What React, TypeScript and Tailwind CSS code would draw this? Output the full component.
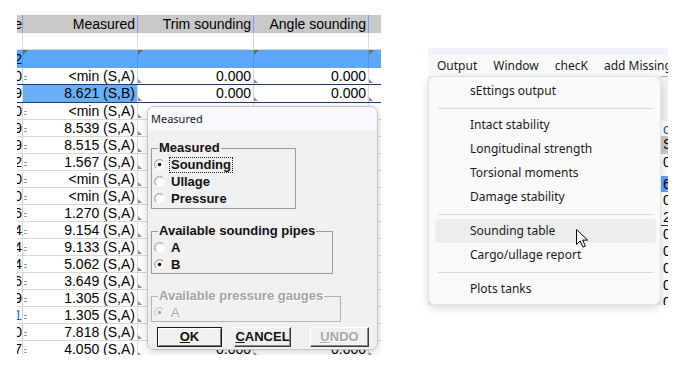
import React from 'react';

type Row = { l: string; m: string; sel?: boolean; lBlue?: boolean };

const rows: Row[] = [
  { l: '0', m: '<min (S,A)' },
  { l: '9', m: '8.621 (S,B)', sel: true },
  { l: '0', m: '<min (S,A)' },
  { l: '9', m: '8.539 (S,A)' },
  { l: '9', m: '8.515 (S,A)' },
  { l: '2', m: '1.567 (S,A)' },
  { l: '0', m: '<min (S,A)' },
  { l: '0', m: '<min (S,A)' },
  { l: '6', m: '1.270 (S,A)' },
  { l: '4', m: '9.154 (S,A)' },
  { l: '4', m: '9.133 (S,A)' },
  { l: '4', m: '5.062 (S,A)' },
  { l: '6', m: '3.649 (S,A)' },
  { l: '9', m: '1.305 (S,A)' },
  { l: '1', m: '1.305 (S,A)', lBlue: true },
  { l: '0', m: '7.818 (S,A)' },
  { l: '7', m: '4.050 (S,A)' },
];

function TriBL() {
  return <span className="absolute left-0 bottom-[1px] w-0 h-0 border-l-[4px] border-t-[4px] border-t-transparent border-l-[#8c8c8c]" />;
}

function TriTL() {
  return <span className="absolute left-0 top-0 w-0 h-0 border-t-[5px] border-r-[5px] border-r-transparent border-t-[#6b6b6b]" />;
}

function EqMark() {
  return (
    <span className="absolute left-[1px] top-[8px] flex flex-col gap-[2px]">
      <span className="block w-[3px] h-px bg-[#9a9a9a]" />
      <span className="block w-[3px] h-px bg-[#9a9a9a]" />
    </span>
  );
}

function Header() {
  const cell = 'h-full border-r border-[#9090f0] leading-[18px] text-right pr-[2px] whitespace-nowrap';
  return (
    <div className="flex h-[18px] bg-[#c9c9c9]">
      <div className="w-[6px] h-full border-r border-[#9090f0] flex justify-end overflow-hidden leading-[18px]">
        <span className="whitespace-nowrap">Type</span>
      </div>
      <div className={`w-[115px] ${cell}`}>Measured</div>
      <div className={`w-[116px] ${cell}`}>Trim sounding</div>
      <div className={`w-[115px] ${cell}`}>Angle sounding</div>
      <div className="w-[12px] h-full" />
    </div>
  );
}

function BlankRow() {
  const c = 'h-full border-r border-b border-[#d8d8d8]';
  return (
    <div className="flex h-[17px] bg-white">
      <div className={`w-[6px] ${c}`} />
      <div className={`w-[115px] ${c}`} />
      <div className={`w-[116px] ${c}`} />
      <div className={`w-[115px] ${c}`} />
      <div className="w-[12px] h-full border-b border-[#d8d8d8]" />
    </div>
  );
}

function BlueRow() {
  const c = 'relative h-full border-r border-[#4f98e8]';
  return (
    <div className="flex h-[18px] bg-[#5aa7fb]">
      <div className={`w-[6px] ${c} flex justify-end overflow-hidden leading-[18px]`}>
        <span className="whitespace-nowrap">2</span>
      </div>
      <div className={`w-[115px] ${c}`}><TriTL /></div>
      <div className={`w-[116px] ${c}`}><TriTL /></div>
      <div className={`w-[115px] ${c}`}><TriTL /></div>
      <div className="relative w-[12px] h-full"><TriTL /></div>
    </div>
  );
}

function DataRow({ r, nextSel }: { r: Row; nextSel?: boolean }) {
  const bottom = r.sel || nextSel ? 'border-b border-b-[#183a70]' : 'border-b border-b-[#d8d8d8]';
  const vr = 'border-r border-r-[#d8d8d8]';
  return (
    <div className={`flex ${r.sel ? 'h-[18px]' : 'h-[17px]'} bg-white ${bottom}`}>
      <div className={`w-[6px] h-full ${vr} flex justify-end overflow-hidden leading-[16px]`}>
        <span className={`whitespace-nowrap ${r.lBlue ? 'text-[#2a6fd8]' : ''}`}>{r.l}</span>
      </div>
      <div className={`relative w-[115px] h-full ${vr} text-right pr-[2px] leading-[16px] whitespace-nowrap ${r.sel ? 'bg-[#68aef8]' : ''}`}>
        <EqMark />
        {r.m}
      </div>
      <div className={`relative w-[116px] h-full ${vr} text-right pr-[2px] leading-[16px]`}>
        <TriBL />
        0.000
      </div>
      <div className={`relative w-[115px] h-full ${vr} text-right pr-[2px] leading-[16px]`}>
        <TriBL />
        0.000
      </div>
      <div className="relative w-[12px] h-full">
        <TriBL />
      </div>
    </div>
  );
}

function Radio({ checked, disabled }: { checked?: boolean; disabled?: boolean }) {
  return (
    <svg width="11" height="11" viewBox="0 0 11 11" className="shrink-0">
      <circle cx="5.5" cy="5.5" r="5" fill={disabled ? '#f0f0f0' : '#ffffff'} />
      <path d="M1.96 9.04 A5 5 0 0 1 9.04 1.96" fill="none" stroke={disabled ? '#c4c4c4' : '#9c9c9c'} strokeWidth="1" />
      <path d="M2.6 8.4 A4 4 0 0 1 8.4 2.6" fill="none" stroke={disabled ? '#dcdcdc' : '#cfcfcf'} strokeWidth="1" />
      {checked && <circle cx="5.5" cy="5.5" r="1.8" fill={disabled ? '#a8a8a8' : '#111111'} />}
    </svg>
  );
}

function RadioRow({ label, checked, focus, disabled }: { label: string; checked?: boolean; focus?: boolean; disabled?: boolean }) {
  return (
    <div className="flex items-center h-[17px] pl-[1px]">
      <Radio checked={checked} disabled={disabled} />
      <span
        className={`ml-[4px] px-[1px] leading-[14px] border ${focus ? 'border-dotted border-[#222]' : 'border-transparent'} ${
          disabled ? 'text-[#a4a4a4] font-normal [text-shadow:1px_1px_0_#ffffff]' : 'text-[#111] font-bold'
        }`}
      >
        {label}
      </span>
    </div>
  );
}

function Btn({ w, children, def, disabled }: { w: string; children: React.ReactNode; def?: boolean; disabled?: boolean }) {
  const border = def
    ? 'border border-[#1a1a1a] shadow-[inset_1px_1px_0_#ffffff,inset_-1px_-1px_0_#7a7a7a]'
    : 'border border-t-white border-l-white border-r-[#3a3a3a] border-b-[#3a3a3a] shadow-[inset_-1px_-1px_0_#8a8a8a]';
  return (
    <div
      className={`${w} h-[20px] ${border} bg-[#f0f0f0] flex items-center justify-center font-bold leading-[14px] ${
        disabled ? 'text-[#a8a8a8] [text-shadow:1px_1px_0_#ffffff]' : 'text-[#111]'
      }`}
    >
      {children}
    </div>
  );
}

function Dialog() {
  return (
    <div className="absolute left-[130px] top-[91px] w-[231px] h-[244px] rounded-[7px] border border-[#c4c4c4] bg-[#f0f0f0] shadow-[0_2px_10px_rgba(0,0,0,0.18)] overflow-hidden flex flex-col">
      <div className="h-[24px] shrink-0 bg-[#f6f8fb] flex items-center pl-[3px] font-['Noto_Sans',sans-serif] text-[11px] text-[#1a1a1a]">
        Measured
      </div>
      <div className="flex flex-col pl-[3px] text-[13px] font-['Liberation_Sans',Arial,sans-serif]">
        <fieldset className="mt-[10px] w-[145px] h-[68px] border border-[#9a9a9a] px-[1px]">
          <legend className="ml-[5px] px-[1px] font-bold leading-[14px] text-[#111]">Measured</legend>
          <div className="pt-[1px]">
            <RadioRow label="Sounding" checked focus />
            <RadioRow label="Ullage" />
            <RadioRow label="Pressure" />
          </div>
        </fieldset>
        <fieldset className="mt-[15px] w-[182px] h-[50px] border border-[#9a9a9a] px-[1px]">
          <legend className="ml-[5px] px-[1px] font-bold leading-[14px] text-[#111]">Available sounding pipes</legend>
          <div className="pt-[1px]">
            <RadioRow label="A" />
            <RadioRow label="B" checked />
          </div>
        </fieldset>
        <fieldset className="mt-[15px] w-[190px] h-[33px] border border-[#b4b4b4] px-[1px]">
          <legend className="ml-[5px] px-[1px] font-bold leading-[14px] text-[#a4a4a4] [text-shadow:1px_1px_0_#ffffff]">
            Available pressure gauges
          </legend>
          <div className="pt-[1px]">
            <RadioRow label="A" checked disabled />
          </div>
        </fieldset>
        <div className="flex mt-[5px] ml-[6px]">
          <Btn w="w-[65px]" def>
            <span><span className="underline">O</span>K</span>
          </Btn>
          <div className="ml-[12px]">
            <Btn w="w-[57px]">
              <span><span className="underline">C</span>ANCEL</span>
            </Btn>
          </div>
          <div className="ml-[19px]">
            <Btn w="w-[59px]" disabled>
              <span><span className="underline">U</span>NDO</span>
            </Btn>
          </div>
        </div>
      </div>
    </div>
  );
}

function LeftPanel() {
  return (
    <div className="relative shrink-0 ml-[17px] mt-[15px] w-[364px] h-[340px] overflow-hidden font-['Liberation_Sans',Arial,sans-serif] text-[14px] text-black">
      <Header />
      <BlankRow />
      <BlueRow />
      {rows.map((r, i) => (
        <DataRow key={i} r={r} nextSel={rows[i + 1]?.sel} />
      ))}
      <Dialog />
    </div>
  );
}

const sliver: { h: string; bg: string; t?: string; tc?: string; bb?: boolean }[] = [
  { h: 'h-[1px]', bg: 'bg-[#a8a8a8]' },
  { h: 'h-[44px]', bg: 'bg-[#f0f0f0]' },
  { h: 'h-[15px]', bg: 'bg-white', t: 'c', tc: 'text-[#1f4f9a]' },
  { h: 'h-[18px]', bg: 'bg-[#c9c9c9]', t: 'S' },
  { h: 'h-[22px]', bg: 'bg-white', t: '0' },
  { h: 'h-[16px]', bg: 'bg-[#5aa7fb]', t: '6' },
  { h: 'h-[17px]', bg: 'bg-white', t: '0' },
  { h: 'h-[17px]', bg: 'bg-white', t: '2', bb: true },
  { h: 'h-[17px]', bg: 'bg-white', t: '0' },
  { h: 'h-[17px]', bg: 'bg-white', t: '0' },
  { h: 'h-[17px]', bg: 'bg-white', t: '0' },
  { h: 'h-[17px]', bg: 'bg-white', t: '0' },
  { h: 'h-[17px]', bg: 'bg-white', t: '0' },
];

function Cursor() {
  return (
    <svg className="absolute left-[147px] top-[152px]" width="14" height="21" viewBox="0 0 14 21">
      <path d="M1.5 1.5 L1.5 16.5 L5.2 13 L8 19.2 L10.4 18.1 L7.7 12.1 L12.6 12.1 Z" fill="#ffffff" stroke="#000000" strokeWidth="1" strokeLinejoin="round" />
    </svg>
  );
}

type MI = { t: string } | { sep: true };
const menu: MI[] = [
  { t: 'sEttings output' },
  { sep: true },
  { t: 'Intact stability' },
  { t: 'Longitudinal strength' },
  { t: 'Torsional moments' },
  { t: 'Damage stability' },
  { sep: true },
  { t: 'Sounding table' },
  { t: 'Cargo/ullage report' },
  { sep: true },
  { t: 'Plots tanks' },
];

function RightPanel() {
  return (
    <div className="shrink-0 ml-[47px] mt-[48px] w-[240px] flex flex-col font-['Noto_Sans',sans-serif] text-[12px] text-[#1a1a1a]">
      <div className="h-[7px] bg-[#edf2f9]" />
      <div className="h-[21px] bg-[#f9f9f9] flex items-center pl-[9px] gap-[16px] overflow-hidden whitespace-nowrap leading-[16px]">
        <span>Output</span>
        <span>Window</span>
        <span>checK</span>
        <span>add Missing tanks</span>
      </div>
      <div className="relative flex flex-col">
        <div className="flex h-[229px]">
          <div className="flex-1 bg-[#f0f0f0]" />
          <div className="w-[7px] flex flex-col overflow-hidden font-['Liberation_Sans',Arial,sans-serif] text-[14px] text-black">
            {sliver.map((s, i) => (
              <div
                key={i}
                className={`${s.h} ${s.bg} ${s.bb ? 'border-b border-[#183a70]' : ''} shrink-0 pl-[2px] leading-[16px] overflow-hidden whitespace-nowrap ${s.tc ?? ''}`}
              >
                {s.t ?? ''}
              </div>
            ))}
          </div>
        </div>
        <div className="h-[6px] bg-white overflow-hidden flex font-['Liberation_Sans',Arial,sans-serif] text-[14px] text-[#8a8a8a] leading-[16px] whitespace-nowrap pt-[3px]">
          <span className="ml-[35px]">1.000 0.000</span>
          <span className="ml-[12px]">7.000 0.000</span>
          <span className="ml-[22px]">0.0</span>
        </div>
        <div className="absolute left-0 top-0 w-[233px] h-[229px] bg-[#f9f9f9] border border-[#e2e2e2] rounded-[7px] shadow-[0_3px_8px_rgba(0,0,0,0.16)] py-[2px] pl-[6px] pr-[4px] flex flex-col">
          {menu.map((m, i) =>
            'sep' in m ? (
              <div key={i} className="h-[10px] flex items-center px-[3px]">
                <div className="h-px w-full bg-[#d9d9d9]" />
              </div>
            ) : (
              <div
                key={i}
                className={`h-[24px] shrink-0 flex items-center pl-[35px] rounded-[4px] ${m.t === 'Sounding table' ? 'bg-[#ececec]' : ''}`}
              >
                {m.t}
              </div>
            )
          )}
        </div>
        <Cursor />
      </div>
    </div>
  );
}

export default function App() {
  return (
    <div className="w-[699px] h-[368px] bg-white overflow-hidden flex items-start">
      <LeftPanel />
      <RightPanel />
    </div>
  );
}
